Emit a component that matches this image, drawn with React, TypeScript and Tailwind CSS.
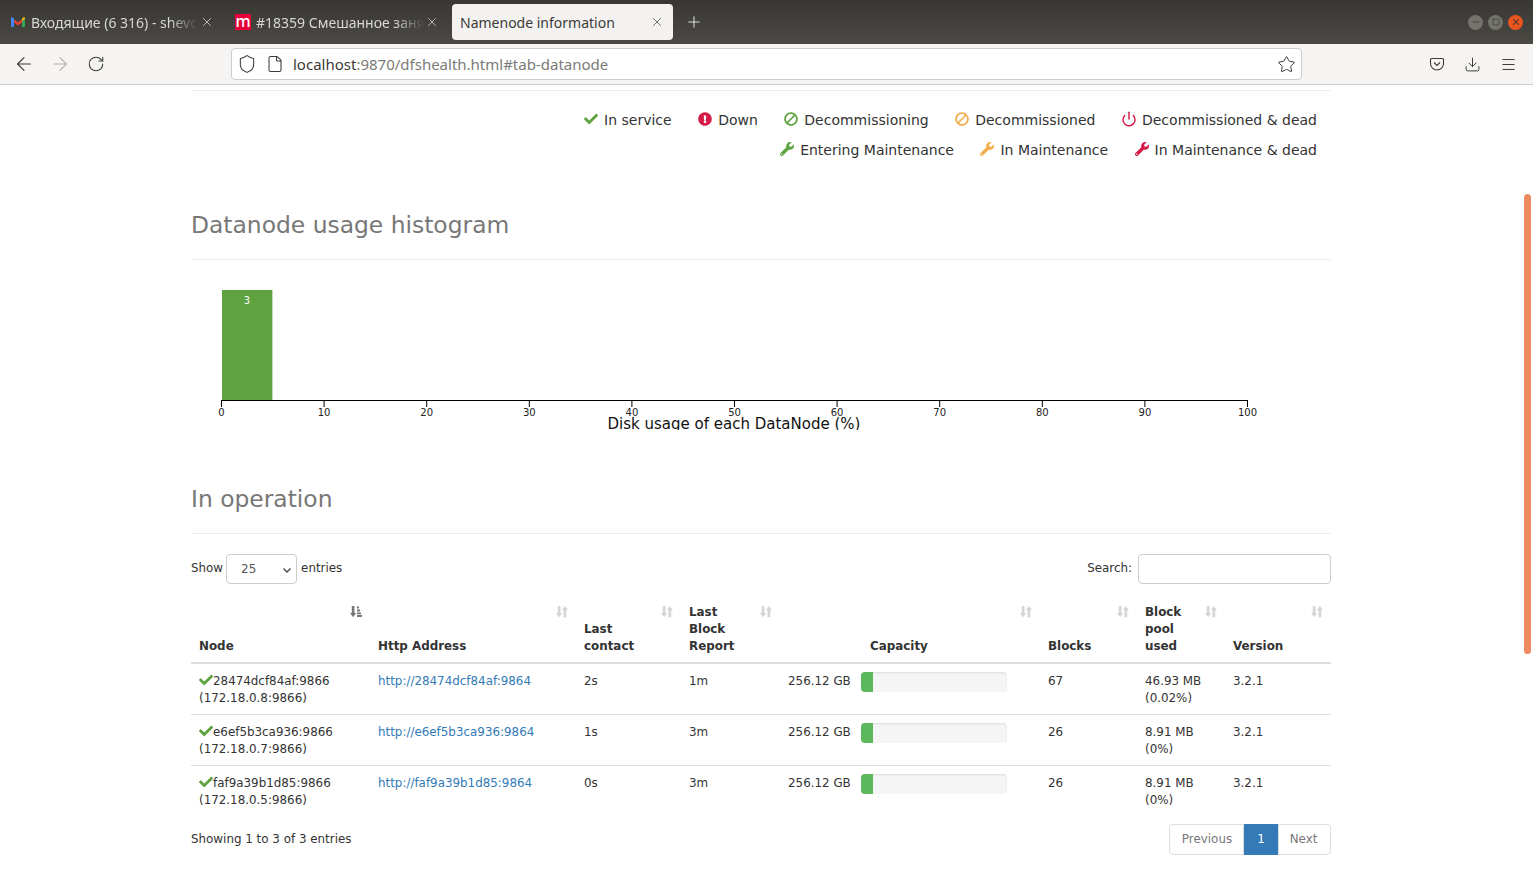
import { ArrowLeft, ArrowRight, Download, Menu, Minus, Plus, Power, RotateCw, Shield, Square, Star, File, X } from "lucide-react";
import { FaBan, FaCheck, FaExclamationCircle, FaWrench } from "react-icons/fa";

const uiFont = "[font-family:'Noto_Sans',sans-serif]";

function BanIcon({ size, className }: { size: number; className?: string }) {
  // the reference's slash runs the other way round
  return <FaBan size={size} className={`-scale-x-100 ${className ?? ""}`} />;
}

function PowerIcon({ size, className }: { size: number; className?: string }) {
  return <Power size={size + 2} strokeWidth={2.2} className={className} />;
}

const legendRows = [
  [
    { label: "In service", Icon: FaCheck, color: "text-[#5fa341]" },
    { label: "Down", Icon: FaExclamationCircle, color: "text-[#d51b47]" },
    { label: "Decommissioning", Icon: BanIcon, color: "text-[#5fa341]" },
    { label: "Decommissioned", Icon: BanIcon, color: "text-[#f0ad4e]" },
    { label: "Decommissioned & dead", Icon: PowerIcon, color: "text-[#d51b47]" },
  ],
  [
    { label: "Entering Maintenance", Icon: FaWrench, color: "text-[#5fa341]" },
    { label: "In Maintenance", Icon: FaWrench, color: "text-[#f0ad4e]" },
    { label: "In Maintenance & dead", Icon: FaWrench, color: "text-[#d51b47]" },
  ],
];

const nodes = [
  { name: "28474dcf84af:9866", ip: "(172.18.0.8:9866)", http: "http://28474dcf84af:9864", contact: "2s", report: "1m", blocks: "67", used: "46.93 MB", pct: "(0.02%)" },
  { name: "e6ef5b3ca936:9866", ip: "(172.18.0.7:9866)", http: "http://e6ef5b3ca936:9864", contact: "1s", report: "3m", blocks: "26", used: "8.91 MB", pct: "(0%)" },
  { name: "faf9a39b1d85:9866", ip: "(172.18.0.5:9866)", http: "http://faf9a39b1d85:9864", contact: "0s", report: "3m", blocks: "26", used: "8.91 MB", pct: "(0%)" },
];

const columns = [
  { lines: ["Node"], width: "w-[179px]", active: true },
  { lines: ["Http Address"], width: "w-[206px]" },
  { lines: ["Last", "contact"], width: "w-[105px]" },
  { lines: ["Last", "Block", "Report"], width: "w-[99px]" },
  { lines: ["Capacity"], width: "w-[260px]", indent: "pl-[90px]" },
  { lines: ["Blocks"], width: "w-[97px]" },
  { lines: ["Block", "pool", "used"], width: "w-[88px]" },
  { lines: ["Version"], width: "w-[106px]" },
];

const cell = "px-2 pt-[9px] pb-[7px] align-top";

function SortIcon({ active }: { active?: boolean }) {
  if (active) {
    return (
      <svg width="12" height="13" viewBox="0 0 12 12" className="absolute top-[1px] right-[8px] text-[#777]">
        <path d="M1.8 0.5h2.6v7h1.8L3.1 11.8 0 7.5h1.8z" fill="currentColor" />
        <path d="M7 1h2v2H7zM7 4h3v2H7zM7 7h4v1.8H7zM7 9.6h5v1.8H7z" fill="currentColor" />
      </svg>
    );
  }
  return (
    <svg width="12" height="13" viewBox="0 0 12 12" className="absolute top-[1px] right-[8px] text-[#d5d5d5]">
      <path d="M1.8 0.5h2.6v7h1.8L3.1 11.8 0 7.5h1.8z" fill="currentColor" />
      <path d="M7.6 11.8h2.6v-7H12L8.9 0.5 5.8 4.8h1.8z" fill="currentColor" />
    </svg>
  );
}

function GmailIcon() {
  return (
    <svg width="16" height="16" viewBox="0 0 16 16" className="shrink-0">
      <path d="M1.5 3.5 8 8.6l6.5-5.1v3L8 11.4 1.5 6.5z" fill="#ea4335" />
      <path d="M1 4.4C1 3.4 2 2.9 2.8 3.5l1.2.9V13H2a1 1 0 0 1-1-1z" fill="#4285f4" />
      <path d="M12 13V7l3-2.3V12a1 1 0 0 1-1 1z" fill="#34a853" />
      <path d="M12 7V4.4l1.2-.9c.8-.6 1.8-.1 1.8.9v.4z" fill="#fbbc04" />
    </svg>
  );
}

function Tab({ title, icon, active }: { title: string; icon?: React.ReactNode; active?: boolean }) {
  return (
    <div className={`relative flex h-9 w-[221px] shrink-0 items-center rounded pl-2 ${active ? "bg-[#f3f2f0] text-[#3c3b37]" : "text-[#d8d7d3]"}`}>
      {icon}
      <span
        className={`overflow-hidden whitespace-nowrap pt-px text-sm ${
          active ? "" : "ml-[5px] w-[168px] [mask-image:linear-gradient(to_right,black_82%,transparent)]"
        }`}
      >
        {title}
      </span>
      <X size={14} strokeWidth={1.4} className={`absolute left-[198px] ${active ? "text-[#55544f]" : "text-[#d8d7d3]"}`} />
    </div>
  );
}

function BrowserChrome() {
  return (
    <header className={`shrink-0 ${uiFont}`}>
      <div className="flex h-11 items-center bg-gradient-to-b from-[#383733] to-[#4a4944] pl-[2px]">
        <div className="flex items-center gap-1">
          <Tab title="Входящие (6 316) - shevchenko" icon={<GmailIcon />} />
          <Tab
            title="#18359 Смешанное занятие"
            icon={<div className="flex h-4 w-4 shrink-0 items-center justify-center bg-[#e8003a] pb-[2px] text-[16px] leading-none font-medium text-white">m</div>}
          />
          <Tab title="Namenode information" active />
        </div>
        <Plus size={18} strokeWidth={1.4} className="ml-[12px] text-[#e0dfdb]" />
        <div className="ml-auto mr-[10px] flex items-center gap-[5px]">
          <div className="flex h-[15px] w-[15px] items-center justify-center rounded-full bg-[#74736e] text-[#3a3935]"><Minus size={10} /></div>
          <div className="flex h-[15px] w-[15px] items-center justify-center rounded-full bg-[#74736e] text-[#3a3935]"><Square size={8} /></div>
          <div className="flex h-[15px] w-[15px] items-center justify-center rounded-full bg-[#e9541f] text-[#3a3935]"><X size={10} strokeWidth={2.5} /></div>
        </div>
      </div>
      <div className="flex h-[41px] items-center border-b border-[#ccc] bg-[#f5f4f2] text-[#3c3b37]">
        <ArrowLeft size={22} strokeWidth={1.25} className="ml-[13px]" />
        <ArrowRight size={22} strokeWidth={1.25} className="ml-[14px] text-[#b3b2ae]" />
        <RotateCw size={18} strokeWidth={1.4} className="ml-[16px]" />
        <div className="ml-[126px] flex h-8 w-[1071px] items-center rounded border border-[#ccc] bg-white pl-[5px] pr-[5px]">
          <Shield size={20} strokeWidth={1.25} />
          <File size={18} strokeWidth={1.4} className="ml-[9px]" />
          <span className="ml-[9px] text-[15px]">
            localhost<span className="text-[#7b7a76]">:9870/dfshealth.html#tab-datanode</span>
          </span>
          <Star size={19} strokeWidth={1.25} className="ml-auto" />
        </div>
        <svg width="16" height="16" viewBox="0 0 16 16" fill="none" stroke="currentColor" strokeWidth="1.1" className="ml-[127px]">
          <path d="M2.5 2.5h11a1 1 0 0 1 1 1v4a6.5 6.5 0 0 1-13 0v-4a1 1 0 0 1 1-1z" />
          <path d="M5 6.5l3 3 3-3" />
        </svg>
        <Download size={17} strokeWidth={1.4} className="ml-[19px]" />
        <Menu size={17} strokeWidth={1.4} className="ml-[19px]" />
      </div>
    </header>
  );
}

function Legend() {
  return (
    <div className="mt-[14px] pr-[14px] text-sm text-[#333]">
      {legendRows.map((row, i) => (
        <div key={i} className="flex h-[30px] items-center justify-end gap-[26.5px]">
          {row.map(({ label, Icon, color }) => (
            <span key={label} className="flex items-center">
              <span className="mr-[6px] flex w-[14px] justify-center">
                <Icon size={14} className={`shrink-0 -translate-y-px ${color}`} />
              </span>
              {label}
            </span>
          ))}
        </div>
      ))}
    </div>
  );
}

function Histogram() {
  const ticks = Array.from({ length: 11 }, (_, i) => i * 10);
  return (
    <svg width="1140" height="170" viewBox="0 0 1140 170" className="block font-['DejaVu_Sans']">
      <rect x="31" y="30" width="50" height="110" fill="#5fa341" />
      <rect x="81" y="30" width="1" height="110" fill="#c5dcba" />
      <text x="56" y="44" fill="#fff" fontSize="10" textAnchor="middle">3</text>
      <line x1="30" x2="1057" y1="140.5" y2="140.5" stroke="#000" />
      {ticks.map((t) => {
        const x = 30.5 + t * 10.26;
        return (
          <g key={t}>
            <line x1={x} x2={x} y1="140" y2="147" stroke="#000" />
            <text x={x} y="155.5" fontSize="10" fill="#222" textAnchor="middle">{t}</text>
          </g>
        );
      })}
      <text x="543" y="169" fontSize="15" fill="#111" textAnchor="middle">Disk usage of each DataNode (%)</text>
    </svg>
  );
}

function DatanodeTable() {
  return (
    <table className="mt-5 w-[1140px] table-fixed border-collapse text-[11.9px] leading-[17px] text-[#333]">
      <colgroup>
        {columns.map((c) => (
          <col key={c.lines.join()} className={c.width} />
        ))}
      </colgroup>
      <thead>
        <tr className="border-b-2 border-[#ddd]">
          {columns.map((c) => (
            <th key={c.lines.join()} className={`relative px-2 pb-[7px] text-left align-bottom font-bold ${c.indent ?? ""}`}>
              <SortIcon active={c.active} />
              {c.lines.map((line) => (
                <div key={line}>{line}</div>
              ))}
            </th>
          ))}
        </tr>
      </thead>
      <tbody>
        {nodes.map((n, i) => (
          <tr key={n.name} className={i < nodes.length - 1 ? "border-b border-[#ddd]" : ""}>
            <td className={cell}>
              <div className="flex items-center">
                <FaCheck size={14} className="-translate-y-[2px] text-[#5fa341]" />
                {n.name}
              </div>
              <div>{n.ip}</div>
            </td>
            <td className={cell}>
              <a href="#" className="text-[#337ab7]">{n.http}</a>
            </td>
            <td className={cell}>{n.contact}</td>
            <td className={cell}>{n.report}</td>
            <td className="px-2 pt-2 pb-[7px] align-top">
              <div className="flex">
                <span className="w-[63px] shrink-0 whitespace-nowrap pt-px">256.12 GB</span>
                <div className="ml-[10px] h-5 w-[146px] overflow-hidden rounded bg-[#f5f5f5] shadow-[inset_0_1px_2px_rgba(0,0,0,0.1)]">
                  <div className="h-full w-3 bg-[#5cb85c]" />
                </div>
              </div>
            </td>
            <td className={cell}>{n.blocks}</td>
            <td className={cell}>
              <div>{n.used}</div>
              <div>{n.pct}</div>
            </td>
            <td className={cell}>3.2.1</td>
          </tr>
        ))}
      </tbody>
    </table>
  );
}

export default function App() {
  return (
    <div className="flex h-screen flex-col overflow-hidden bg-white font-['DejaVu_Sans',sans-serif]">
      <BrowserChrome />
      <main className="relative min-h-0 flex-1 overflow-hidden pl-[191px]">
        <div className="w-[1140px]">
          <div className="mt-[5px] h-px bg-[#eee]" />
          <Legend />

          <h2 className="mt-[47px] border-b border-[#eee] pb-[21px] text-[23.4px] leading-[26px] text-[#777]">Datanode usage histogram</h2>
          <Histogram />

          <h2 className="mt-14 border-b border-[#eee] pb-[21px] text-[23.4px] leading-[26px] text-[#777]">In operation</h2>

          <div className="mt-5 flex h-[30px] items-center justify-between text-[11.9px] text-[#333]">
            <div className="flex items-center">
              <span className="-mt-px">Show</span>
              <div className="mr-1 ml-[3px] flex h-[30px] w-[71px] items-center justify-between rounded border border-[#ccc] pt-px pl-[14px] pr-[4px] text-[#555]">
                25
                <svg width="10" height="10" viewBox="0 0 10 10" fill="none" stroke="#444" strokeWidth="1.3">
                  <path d="M1.5 3.5 5 7l3.5-3.5" />
                </svg>
              </div>
              <span className="-mt-px">entries</span>
            </div>
            <div className="flex items-center">
              <span className="-mt-px">Search:</span>
              <input className="ml-[6px] h-[30px] w-[193px] rounded border border-[#ccc] bg-white" />
            </div>
          </div>

          <DatanodeTable />

          <div className="mt-2 flex items-start justify-between text-[11.9px] text-[#333]">
            <div className="pt-[7px]">Showing 1 to 3 of 3 entries</div>
            <div className="flex h-[31px] items-stretch text-[#777]">
              <div className="flex w-[75px] items-center justify-center rounded-l border border-[#ddd] pt-px pl-px">Previous</div>
              <div className="flex w-[34px] items-center justify-center bg-[#337ab7] pt-px text-white">1</div>
              <div className="flex w-[53px] items-center justify-center rounded-r border border-[#ddd] pt-px pr-[2px]">Next</div>
            </div>
          </div>
        </div>

        <div className="absolute top-[109px] right-[2px] h-[460px] w-[7px] rounded bg-[#ee8a5f]" />
      </main>
    </div>
  );
}
